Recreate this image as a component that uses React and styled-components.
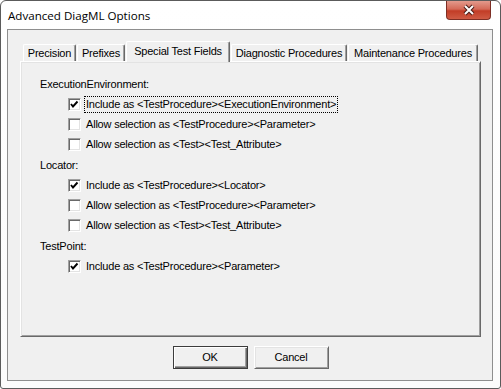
import React from "react";
import styled, { createGlobalStyle } from "styled-components";

const GlobalStyle = createGlobalStyle`
  body {
    margin: 0;
    background: #ffffff;
    font-family: "Liberation Sans", Arial, sans-serif;
  }
`;

const Window = styled.div`
  box-sizing: border-box;
  width: 501px;
  height: 389px;
  border: 1px solid #5b5b5b;
  border-radius: 6px 6px 3px 3px;
  background: linear-gradient(#ffffff, #fbfbfb);
  padding: 0 7px 7px 6px;
  display: flex;
  flex-direction: column;
`;

const TitleBar = styled.div`
  height: 28px;
  display: flex;
  justify-content: space-between;
  align-items: flex-start;
  flex: none;
`;

const Title = styled.div`
  padding: 7px 0 0 1px;
  font-family: "Open Sans", "Liberation Sans", sans-serif;
  font-size: 11.6px;
  line-height: 16px;
  color: #000;
`;

const CloseButton = styled.div`
  box-sizing: border-box;
  width: 45px;
  height: 19px;
  margin-right: 2px;
  border: 1px solid #7d2f25;
  border-top: none;
  border-radius: 0 0 4px 4px;
  background: linear-gradient(#e39a8c 0%, #d46a58 45%, #c23d27 55%, #cf5b44 100%);
  display: flex;
  align-items: center;
  justify-content: center;
`;

const Client = styled.div`
  flex: 1;
  border: 1px solid #8e8e8e;
  background: #f0f0f0;
  padding: 11px 11px 0 12px;
  display: flex;
  flex-direction: column;
  font-size: 11px;
  letter-spacing: -0.2px;
`;

const TabStrip = styled.div`
  display: flex;
  align-items: flex-end;
  height: 20px;
  padding-left: 3px;
  position: relative;
  z-index: 2;
`;

const Tab = styled.div`
  box-sizing: border-box;
  width: ${(p) => p.$w}px;
  height: ${(p) => (p.$active ? 21 : 17)}px;
  margin-bottom: ${(p) => (p.$active ? -1 : 0)}px;
  margin-right: 1px;
  padding-top: ${(p) => (p.$active ? 3 : 2)}px;
  border-top: 1px solid #ffffff;
  border-left: 1px solid #ffffff;
  border-right: 1px solid #696969;
  box-shadow: inset -1px 0 #a0a0a0;
  border-radius: 2px 2px 0 0;
  background: #f0f0f0;
  line-height: 13px;
  color: #000;
  white-space: nowrap;
  text-align: center;
`;

const Panel = styled.div`
  box-sizing: border-box;
  height: 276px;
  border-style: solid;
  border-width: 1px;
  border-color: #ffffff #696969 #696969 #ffffff;
  box-shadow: inset 1px 1px #e3e3e3, inset -1px -1px #a0a0a0;
  background: #f0f0f0;
  padding: 12px 0 0 19px;
  display: flex;
  flex-direction: column;
`;

const Section = styled.div`
  display: flex;
  flex-direction: column;
  margin-bottom: 1px;
`;

const Heading = styled.div`
  height: 20px;
  line-height: 20px;
  color: #000;
`;

const Row = styled.div`
  height: 20px;
  display: flex;
  align-items: center;
  gap: 3px;
  padding-left: 28px;
`;

const Box = styled.div`
  box-sizing: border-box;
  width: 13px;
  height: 13px;
  border-style: solid;
  border-width: 1px;
  border-color: #a0a0a0 #ffffff #ffffff #a0a0a0;
  box-shadow: inset 1px 1px #696969, inset -1px -1px #e3e3e3;
  background: #ffffff;
  display: flex;
  align-items: center;
  justify-content: center;
  flex: none;
`;

const Label = styled.span`
  padding: 1px 1px;
  border: 1px dotted ${(p) => (p.$focus ? "#000" : "transparent")};
  line-height: 13px;
  color: #000;
  white-space: nowrap;
`;

const Footer = styled.div`
  display: flex;
  justify-content: center;
  gap: 6px;
  padding-top: 9px;
`;

const Button = styled.div`
  box-sizing: border-box;
  width: 75px;
  height: 23px;
  border-style: solid;
  border-width: 1px;
  border-color: ${(p) => (p.$default ? "#3c3c3c" : "#ffffff #696969 #696969 #ffffff")};
  box-shadow: ${(p) =>
    p.$default
      ? "inset 1px 1px #ffffff, inset -1px -1px #696969, inset -2px -2px #a0a0a0"
      : "inset 1px 1px #e3e3e3, inset -1px -1px #a0a0a0"};
  background: #f0f0f0;
  line-height: 21px;
  text-align: center;
  color: #000;
`;

function Check({ checked }) {
  return (
    <Box>
      {checked && (
        <svg width="9" height="9" viewBox="0 0 9 9">
          <polyline points="1,4 3,6.5 7.5,1.5" fill="none" stroke="#000" strokeWidth="1.9" />
        </svg>
      )}
    </Box>
  );
}

const sections = [
  {
    name: "ExecutionEnvironment:",
    rows: [
      ["Include as <TestProcedure><ExecutionEnvironment>", true, true],
      ["Allow selection as <TestProcedure><Parameter>", false],
      ["Allow selection as <Test><Test_Attribute>", false],
    ],
  },
  {
    name: "Locator:",
    rows: [
      ["Include as <TestProcedure><Locator>", true],
      ["Allow selection as <TestProcedure><Parameter>", false],
      ["Allow selection as <Test><Test_Attribute>", false],
    ],
  },
  {
    name: "TestPoint:",
    rows: [["Include as <TestProcedure><Parameter>", true]],
  },
];

const tabs = [
  ["Precision", 53],
  ["Prefixes", 48],
  ["Special Test Fields", 104, true],
  ["Diagnostic Procedures", 116],
  ["Maintenance Procedures", 130],
];

export default function App() {
  return (
    <>
      <GlobalStyle />
      <Window>
        <TitleBar>
          <Title>Advanced DiagML Options</Title>
          <CloseButton>
            <svg width="14" height="12" viewBox="0 0 14 12">
              <path d="M3 2 L11 10 M11 2 L3 10" stroke="#4a1c16" strokeWidth="4" />
              <path d="M3 2 L11 10 M11 2 L3 10" stroke="#ffffff" strokeWidth="2" />
            </svg>
          </CloseButton>
        </TitleBar>
        <Client>
          <TabStrip>
            {tabs.map(([t, w, a]) => (
              <Tab key={t} $w={w} $active={a}>
                {t}
              </Tab>
            ))}
          </TabStrip>
          <Panel>
            {sections.map((s) => (
              <Section key={s.name}>
                <Heading>{s.name}</Heading>
                {s.rows.map(([text, checked, focus], i) => (
                  <Row key={i}>
                    <Check checked={checked} />
                    <Label $focus={focus}>{text}</Label>
                  </Row>
                ))}
              </Section>
            ))}
          </Panel>
          <Footer>
            <Button $default>OK</Button>
            <Button>Cancel</Button>
          </Footer>
        </Client>
      </Window>
    </>
  );
}
